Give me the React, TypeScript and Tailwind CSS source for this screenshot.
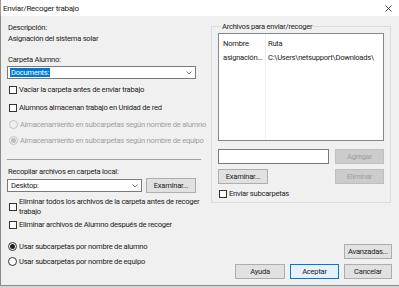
import React from "react";

const font = "font-['Roboto','Liberation_Sans',sans-serif]";

function Checkbox({ checked = false }: { checked?: boolean }) {
    return (
        <span className="w-[8px] h-[8px] shrink-0 border border-[#333333] bg-white flex items-center justify-center">
            {checked && <span className="w-[4px] h-[4px] bg-[#333333]" />}
        </span>
    );
}

function Radio({ checked = false, disabled = false }: { checked?: boolean; disabled?: boolean }) {
    return (
        <span
            className={
                "w-[9px] h-[9px] shrink-0 rounded-full border flex items-center justify-center " +
                (disabled ? "border-[#c4c4c4] bg-[#f0f0f0]" : "border-[#333333] bg-white")
            }
        >
            {checked && <span className={"w-[5px] h-[5px] rounded-full " + (disabled ? "bg-[#bdbdbd]" : "bg-[#222222]")} />}
        </span>
    );
}

function Chevron() {
    return (
        <svg width="6" height="4" viewBox="0 0 6 4" className="shrink-0">
            <polyline points="0.5,0.5 3,3 5.5,0.5" fill="none" stroke="#606060" strokeWidth="0.8" />
        </svg>
    );
}

function Button({ label, w, disabled = false, focused = false }: { label: string; w: string; disabled?: boolean; focused?: boolean }) {
    return (
        <button
            className={
                "h-[15px] shrink-0 flex items-center justify-center border " +
                w +
                " " +
                (disabled
                    ? "bg-[#cccccc] border-[#bfbfbf] text-[#a0a0a0]"
                    : focused
                      ? "bg-[#e5f1fb] border-[#0078d7] text-[#222222]"
                      : "bg-[#e1e1e1] border-[#adadad] text-[#222222]")
            }
        >
            {label}
        </button>
    );
}

export default function App() {
    return (
        <div className={"w-[399px] h-[288px] bg-[#f0f0f0] flex flex-col overflow-hidden text-[7.6px] leading-[11px] tracking-[-0.25px] text-[#222222] " + font}>
            {/* Title bar */}
            <div className="h-[16px] shrink-0 bg-white flex items-center justify-between pl-[2px] pr-[7px] border-l border-[#9a9a9a]">
                <span className="text-[8px]">Enviar/Recoger trabajo</span>
                <svg width="7" height="7" viewBox="0 0 7 7">
                    <line x1="0.5" y1="0.5" x2="6.5" y2="6.5" stroke="#333" strokeWidth="0.9" />
                    <line x1="6.5" y1="0.5" x2="0.5" y2="6.5" stroke="#333" strokeWidth="0.9" />
                </svg>
            </div>

            {/* Body */}
            <div className="flex flex-1 border-l border-b border-[#8a8a8a]">
                {/* Left column */}
                <div className="w-[210px] shrink-0 pl-[6px] pt-[6px] flex flex-col whitespace-nowrap">
                    <div className="h-[11px] pl-[1px]">Descripción:</div>
                    <div className="h-[11px] pl-[1px]">Asignación del sistema solar</div>

                    <div className="h-[11px] pl-[1px] mt-[10px]">Carpeta Alumno:</div>
                    <div className="mt-[1px] w-[189px] h-[13px] bg-white border border-[#7a7a7a] flex items-center justify-between pl-[2px] pr-[3px]">
                        <span className="bg-[#0078d7] text-white px-[1px] leading-[9px]">Documents:</span>
                        <Chevron />
                    </div>

                    <div className="mt-[5px] h-[11px] flex items-center gap-[2px] pl-[2px]">
                        <Checkbox />
                        <span>Vaciar la carpeta antes de enviar trabajo</span>
                    </div>
                    <div className="mt-[7px] h-[11px] flex items-center gap-[2px] pl-[2px]">
                        <Checkbox />
                        <span>Alumnos almacenan trabajo en Unidad de red</span>
                    </div>
                    <div className="mt-[6px] h-[11px] flex items-center gap-[2px] pl-[2px] text-[#a0a0a0]">
                        <Radio disabled />
                        <span>Almacenamiento en subcarpetas según nombre de alumno</span>
                    </div>
                    <div className="mt-[5px] h-[11px] flex items-center gap-[2px] pl-[2px] text-[#a0a0a0]">
                        <Radio disabled checked />
                        <span>Almacenamiento en subcarpetas según nombre de equipo</span>
                    </div>

                    <div className="mt-[13px] w-[194px] h-px bg-[#a0a0a0]" />

                    <div className="mt-[6px] h-[11px] pl-[1px]">Recopilar archivos en carpeta local:</div>
                    <div className="mt-px flex items-center gap-[4px]">
                        <div className="w-[135px] h-[13px] bg-white border border-[#7a7a7a] flex items-center justify-between pl-[3px] pr-[3px]">
                            <span>Desktop:</span>
                            <Chevron />
                        </div>
                        <Button label="Examinar..." w="w-[50px]" />
                    </div>

                    <div className="mt-[4px] flex items-center gap-[2px] pl-[2px]">
                        <Checkbox />
                        <span className="leading-[10px]">
                            Eliminar todos los archivos de la carpeta antes de recoger
                            <br />
                            trabajo
                        </span>
                    </div>
                    <div className="mt-[2px] h-[11px] flex items-center gap-[2px] pl-[2px]">
                        <Checkbox />
                        <span>Eliminar archivos de Alumno después de recoger</span>
                    </div>

                    <div className="mt-[11px] h-[11px] flex items-center gap-[2px] pl-[1px]">
                        <Radio checked />
                        <span>Usar subcarpetas por nombre de alumno</span>
                    </div>
                    <div className="mt-[4px] h-[11px] flex items-center gap-[2px] pl-[1px]">
                        <Radio />
                        <span>Usar subcarpetas por nombre de equipo</span>
                    </div>
                </div>

                {/* Right column */}
                <div className="flex-1 flex flex-col pt-[5px] pr-[7px] pb-[6px]">
                    <fieldset className="w-[180px] border border-[#dcdcdc] px-[6px] pb-[3px]">
                        <legend className="ml-[3px] px-[1px] leading-[11px]">Archivos para enviar/recoger</legend>
                        <div className="mt-[1px] h-[108px] bg-white border border-[#828790] flex whitespace-nowrap">
                            <div className="w-[47px] shrink-0 overflow-hidden border-r border-[#f0f0f0] pl-[4px] pt-[4px] flex flex-col gap-[3px]">
                                <span>Nombre</span>
                                <span>asignación...</span>
                            </div>
                            <div className="flex-1 pl-[2px] pt-[4px] flex flex-col gap-[3px]">
                                <span>Ruta</span>
                                <span>C:\Users\netsupport\Downloads\</span>
                            </div>
                        </div>
                        <div className="mt-[8px] flex justify-between">
                            <div className="w-[111px] h-[15px] bg-white border border-[#7a7a7a]" />
                            <Button label="Agregar" w="w-[49px]" disabled />
                        </div>
                        <div className="mt-[5px] flex justify-between">
                            <Button label="Examinar..." w="w-[50px]" />
                            <Button label="Eliminar" w="w-[49px]" disabled />
                        </div>
                        <div className="mt-[4px] h-[11px] flex items-center gap-[2px] pl-px">
                            <Checkbox />
                            <span>Enviar subcarpetas</span>
                        </div>
                    </fieldset>

                    <div className="flex-1" />

                    <div className="flex justify-end">
                        <Button label="Avanzadas..." w="w-[48px]" />
                    </div>
                    <div className="mt-[5px] flex justify-end gap-[5px]">
                        <Button label="Ayuda" w="w-[50px]" />
                        <Button label="Aceptar" w="w-[49px]" focused />
                        <Button label="Cancelar" w="w-[48px]" />
                    </div>
                </div>
            </div>
            <div className="h-[2px] bg-[#d4d4d4] shrink-0" />
        </div>
    );
}
